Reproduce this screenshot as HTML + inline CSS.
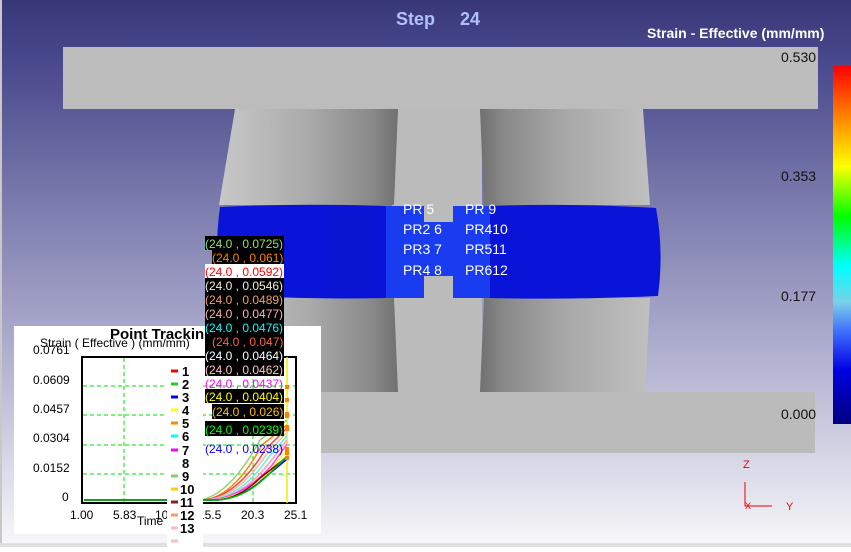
<!DOCTYPE html>
<html><head><meta charset="utf-8"><style>
body{margin:0;width:851px;height:547px;overflow:hidden;font-family:"Liberation Sans",sans-serif}
svg text{font-family:"Liberation Sans",sans-serif}
</style></head><body>
<svg width="851" height="547" viewBox="0 0 851 547" xmlns="http://www.w3.org/2000/svg">
<defs>
<linearGradient id="bg" x1="0" y1="0" x2="0" y2="1">
<stop offset="0" stop-color="#383878"/><stop offset="0.1" stop-color="#46468a"/>
<stop offset="0.45" stop-color="#8a8ab8"/><stop offset="0.75" stop-color="#c4c4dc"/><stop offset="1" stop-color="#f8f8fa"/></linearGradient>
<linearGradient id="cl" x1="0" y1="0" x2="1" y2="0">
<stop offset="0" stop-color="#c8c8c8"/><stop offset="0.5" stop-color="#aaaaaa"/><stop offset="0.85" stop-color="#8a8a8a"/><stop offset="1" stop-color="#707070"/></linearGradient>
<linearGradient id="cr" x1="0" y1="0" x2="1" y2="0">
<stop offset="0" stop-color="#707070"/><stop offset="0.15" stop-color="#8a8a8a"/><stop offset="0.5" stop-color="#a8a8a8"/><stop offset="1" stop-color="#c0c0c0"/></linearGradient>
<linearGradient id="cb" x1="0" y1="0" x2="0" y2="1">
<stop offset="0" stop-color="#ff0000"/><stop offset="0.12" stop-color="#ff7000"/><stop offset="0.28" stop-color="#ffff00"/><stop offset="0.42" stop-color="#00ff00"/><stop offset="0.56" stop-color="#00ffff"/><stop offset="0.66" stop-color="#7ad0e8"/><stop offset="0.74" stop-color="#4070ff"/><stop offset="0.85" stop-color="#0000e0"/><stop offset="1" stop-color="#000080"/></linearGradient>
</defs>
<rect width="851" height="547" fill="url(#bg)"/>
<rect x="0" y="0" width="2" height="547" fill="#c8c8c8"/>
<rect x="0" y="543" width="851" height="4" fill="#e0e0e0"/>
<!-- gap gray -->
<rect x="392" y="100" width="90" height="300" fill="#bbbbbb"/>
<!-- cylinders -->
<polygon points="235,109 398,109 394,205 219,205" fill="url(#cl)"/>
<polygon points="219,298 394,298 398,392 235,392" fill="url(#cl)"/>
<polygon points="480,109 643,109 650,205 484,205" fill="url(#cr)"/>
<polygon points="484,298 650,298 645,392 480,392" fill="url(#cr)"/>
<!-- plates -->
<rect x="63" y="47" width="755" height="62" fill="#bcbcbc"/>
<rect x="63" y="392" width="752" height="61" fill="#bbbbbb"/>
<!-- blue band -->
<path d="M220,207 Q300,203 386,206 L386,298 Q300,300 220,294 Q214,250 220,207Z" fill="#0a14d8"/>
<path d="M490,206 Q570,203 656,208 Q664,250 658,296 Q570,300 490,298Z" fill="#0a14d8"/>
<path d="M386,206 L424,206 L424,222 L453,222 L453,206 L490,206 L490,298 L453,298 L453,276 L424,276 L424,298 L386,298 Z" fill="#1a3cf0"/>
<rect x="330" y="210" width="40" height="80" fill="#0814c8" opacity="0.4"/>
<g font-size="14" fill="#fff">
<text x="403" y="214">PR 5</text><text x="465" y="214">PR 9</text>
<text x="403" y="234">PR2 6</text><text x="465" y="234">PR410</text>
<text x="403" y="254">PR3 7</text><text x="465" y="254">PR511</text>
<text x="403" y="275">PR4 8</text><text x="465" y="275">PR612</text>
</g>
<!-- titles -->
<text x="396" y="25" font-size="18" font-weight="bold" fill="#b0c0ff">Step</text>
<text x="460" y="25" font-size="18" font-weight="bold" fill="#b0c0ff">24</text>
<text x="647" y="38" font-size="14" font-weight="bold" fill="#fff">Strain - Effective (mm/mm)</text>
<rect x="833" y="66" width="18" height="358" fill="url(#cb)"/>
<g font-size="14" fill="#111"><text x="781" y="62">0.530</text><text x="781" y="181">0.353</text><text x="781" y="301">0.177</text><text x="781" y="419">0.000</text></g>
<g stroke="#e00" fill="none"><path d="M745,482 V506 H772"/></g>
<g font-size="11" fill="#e00"><text x="743" y="468">Z</text><text x="786" y="510">Y</text><text x="745" y="509" font-size="9">X</text></g>
<!-- plot panel -->
<rect x="14" y="326" width="307" height="208" fill="#fff"/>
<text x="110" y="339" font-size="15" font-weight="bold" fill="#000">Point Tracking</text>
<text x="40" y="347" font-size="12" fill="#000">Strain ( Effective )  (mm/mm)</text>
<g font-size="12" fill="#000">
<text x="33" y="354">0.0761</text><text x="33" y="384">0.0609</text><text x="33" y="413">0.0457</text><text x="33" y="442">0.0304</text><text x="33" y="472">0.0152</text><text x="62" y="501">0</text>
<text x="70" y="519">1.00</text><text x="113" y="519">5.83</text><text x="155" y="519">10.7</text><text x="198" y="519">15.5</text><text x="241" y="519">20.3</text><text x="284" y="519">25.1</text>
<text x="137" y="525">Time (sec)</text>
</g>
<g stroke="#00e000" stroke-dasharray="4,3" stroke-width="1">
<path d="M124,358V502M253,358V502M83,386H295M83,415H295M83,445H295M83,474H295"/>
</g>
<rect x="82" y="357" width="214" height="146" fill="none" stroke="#000" stroke-width="2"/>
<line x1="287" y1="357" x2="287" y2="503" stroke="#f0f000" stroke-width="1.5"/>
<g fill="none" stroke-width="1.5">
<path d="M84,500 H200 Q230,495 260,440 L287,420" stroke="#90d070"/>
<path d="M84,500 H205 Q235,495 262,445 L287,425" stroke="#ff8000"/>
<path d="M84,500 H205 Q238,495 265,450 L287,428" stroke="#ff4040"/>
<path d="M84,500 H208 Q240,495 266,455 L287,432" stroke="#f0c0a0"/>
<path d="M84,500 H210 Q242,496 268,458 L287,436" stroke="#60f0f0"/>
<path d="M84,500 H212 Q244,496 270,462 L287,440" stroke="#ffa0a0"/>
<path d="M84,500 H212 Q245,496 272,465 L287,444" stroke="#ff40ff"/>
<path d="M84,500 H215 Q245,497 270,470 L287,450" stroke="#ffff00"/>
<path d="M84,500 H218 Q240,498 260,478 L287,457" stroke="#800000"/>
<path d="M84,500 H218 Q242,498 262,480 L287,459" stroke="#0000ff"/>
<path d="M84,500 H218 Q244,498 265,478 L287,456" stroke="#00c000"/>
</g>
<g fill="#ff8000"><rect x="285" y="398" width="4" height="4"/><rect x="285" y="412" width="4" height="6"/><rect x="285" y="425" width="4" height="6"/><rect x="285" y="447" width="4" height="8"/><rect x="285" y="456" width="4" height="4"/><rect x="285" y="385" width="4" height="4"/></g>
<!-- legend -->
<rect x="167" y="362" width="36" height="185" fill="#fff"/>
<g font-size="13" font-weight="bold" fill="#000">
<text x="182" y="376">1</text><text x="182" y="389">2</text><text x="182" y="402">3</text><text x="182" y="415">4</text><text x="182" y="428">5</text><text x="182" y="441">6</text><text x="182" y="455">7</text><text x="182" y="468">8</text><text x="182" y="481">9</text><text x="180" y="494">10</text><text x="180" y="507">11</text><text x="180" y="520">12</text><text x="180" y="533">13</text>
</g>
<g stroke-width="3">
<line x1="171" y1="371" x2="178" y2="371" stroke="#f00"/><line x1="171" y1="384" x2="178" y2="384" stroke="#2c2"/><line x1="171" y1="397" x2="178" y2="397" stroke="#00f"/><line x1="171" y1="410" x2="178" y2="410" stroke="#ff0"/><line x1="171" y1="423" x2="178" y2="423" stroke="#f80"/><line x1="171" y1="436" x2="178" y2="436" stroke="#0ff"/><line x1="171" y1="450" x2="178" y2="450" stroke="#f0f"/><line x1="171" y1="463" x2="178" y2="463" stroke="#ffe"/><line x1="171" y1="476" x2="178" y2="476" stroke="#8c6"/><line x1="171" y1="489" x2="178" y2="489" stroke="#fc0"/><line x1="171" y1="502" x2="178" y2="502" stroke="#822"/><line x1="171" y1="515" x2="178" y2="515" stroke="#f96"/><line x1="171" y1="528" x2="178" y2="528" stroke="#fbb"/><line x1="171" y1="541" x2="178" y2="541" stroke="#fbb"/>
</g>
<!-- value labels -->
<g font-size="12">
<rect x="205" y="236" width="79" height="14" fill="#000"/><text x="205" y="248" fill="#90e070">(24.0 , 0.0725)</text>
<rect x="212" y="250" width="72" height="14" fill="#000"/><text x="212" y="262" fill="#ff8000">(24.0 , 0.061)</text>
<rect x="205" y="264" width="79" height="14" fill="#fff"/><text x="205" y="276" fill="#f00">(24.0 , 0.0592)</text>
<rect x="205" y="278" width="79" height="14" fill="#000"/><text x="205" y="290" fill="#f0f0d0">(24.0 , 0.0546)</text>
<rect x="205" y="292" width="79" height="14" fill="#000"/><text x="205" y="304" fill="#f0a060">(24.0 , 0.0489)</text>
<rect x="205" y="306" width="79" height="14" fill="#000"/><text x="205" y="318" fill="#ffb0b0">(24.0 , 0.0477)</text>
<rect x="205" y="320" width="79" height="14" fill="#000"/><text x="205" y="332" fill="#00ffff">(24.0 , 0.0476)</text>
<rect x="205" y="334" width="79" height="14" fill="#000"/><text x="212" y="346" fill="#ff6040">(24.0 , 0.047)</text>
<rect x="205" y="348" width="79" height="14" fill="#000"/><text x="205" y="360" fill="#fff">(24.0 , 0.0464)</text>
<rect x="205" y="362" width="79" height="14" fill="#000"/><text x="205" y="374" fill="#ffc0c0">(24.0 , 0.0462)</text>
<text x="205" y="388" fill="#ff00ff">(24.0 , 0.0437)</text>
<rect x="205" y="389" width="79" height="14" fill="#000"/><text x="205" y="401" fill="#ffff00">(24.0 , 0.0404)</text>
<rect x="212" y="404" width="72" height="15" fill="#000"/><text x="212" y="416" fill="#ffc000">(24.0 , 0.026)</text>
<rect x="205" y="421" width="79" height="15" fill="#000"/><text x="205" y="434" fill="#00ff00">(24.0 , 0.0239)</text>
<text x="205" y="453" fill="#0000ff">(24.0 , 0.0238)</text>
</g>
</svg>
</body></html>
